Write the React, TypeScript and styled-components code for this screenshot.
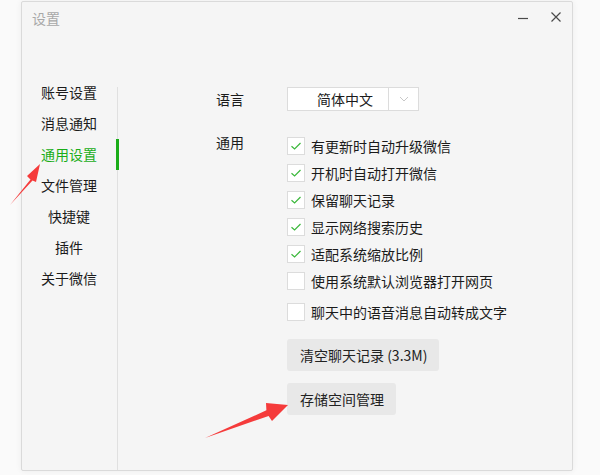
import styled, { createGlobalStyle } from "styled-components";

const GlobalStyle = createGlobalStyle`
  html, body {
    margin: 0;
    padding: 0;
    background: #fafafa;
  }
  body {
    font-family: "Noto Sans CJK SC", "Noto Sans", "Liberation Sans", sans-serif;
    font-size: 14px;
    color: #1b1b1b;
  }
`;

const Page = styled.div`
  position: relative;
  width: 600px;
  height: 475px;
  padding: 1px 0 0 21px;
  box-sizing: border-box;
`;

const Window = styled.div`
  width: 552px;
  height: 470px;
  box-sizing: border-box;
  background: #f5f5f5;
  border: 1px solid #dadada;
  border-radius: 2px;
  box-shadow: 0 0 6px rgba(0, 0, 0, 0.06);
  display: flex;
  flex-direction: column;
`;

const TitleBar = styled.div`
  height: 75px;
  display: flex;
  align-items: flex-start;
  justify-content: space-between;
  padding: 6px 0 0 10px;
  box-sizing: border-box;
`;

const Title = styled.div`
  color: #a8a8a8;
  font-size: 14px;
  line-height: 20px;
`;

const WinButtons = styled.div`
  display: flex;
  align-items: center;
  gap: 21px;
  padding: 3px 10px 0 0;
`;

const WinButton = styled.svg`
  width: 12px;
  height: 12px;
  display: block;
`;

const Body = styled.div`
  flex: 1;
  display: flex;
  min-height: 0;
`;

const Sidebar = styled.ul`
  position: relative;
  z-index: 1;
  width: 97px;
  margin: 0 -2px 0 0;
  padding: 0;
  list-style: none;
`;

const NavItem = styled.li<{ $active?: boolean }>`
  height: 31px;
  line-height: 31px;
  text-align: center;
  box-sizing: border-box;
  color: ${(p) => (p.$active ? "#1aad19" : "#1b1b1b")};
  border-right: 3px solid ${(p) => (p.$active ? "#1aad19" : "transparent")};
`;

const Content = styled.div`
  flex: 1;
  margin-top: 10px;
  border-left: 1px solid #e0e0e0;
  padding-left: 98px;
  display: flex;
  flex-direction: column;
`;

const Row = styled.div<{ $top?: number }>`
  display: flex;
  align-items: flex-start;
  margin-top: ${(p) => p.$top ?? 0}px;
`;

const Label = styled.div<{ $shift?: number }>`
  width: 71px;
  flex: none;
  line-height: 14px;
  margin-top: ${(p) => p.$shift ?? 0}px;
`;

const Select = styled.div`
  display: flex;
  height: 24px;
  background: #fff;
  border: 1px solid #dcdcdc;
  box-sizing: border-box;
`;

const SelectValue = styled.div`
  width: 100px;
  line-height: 22px;
  padding-left: 14px;
  box-sizing: border-box;
  text-align: center;
`;

const SelectArrow = styled.div`
  width: 29px;
  border-left: 1px solid #dcdcdc;
  display: flex;
  align-items: center;
  justify-content: center;
`;

const Options = styled.div`
  display: flex;
  flex-direction: column;
  align-items: flex-start;
`;

const CheckRow = styled.label<{ $top: number }>`
  display: flex;
  align-items: center;
  gap: 6px;
  height: 18px;
  margin-top: ${(p) => p.$top}px;
  line-height: 18px;
`;

const Box = styled.span`
  width: 18px;
  height: 18px;
  box-sizing: border-box;
  background: #fff;
  border: 1px solid #dcdcdc;
  display: flex;
  align-items: center;
  justify-content: center;
`;

const Button = styled.button<{ $top: number }>`
  height: 32px;
  margin-top: ${(p) => p.$top}px;
  padding: 0 12px 0 13px;
  border: none;
  border-radius: 3px;
  background: #e8e8e8;
  color: #222;
  font-family: inherit;
  font-size: 14px;
  cursor: pointer;
`;

const Annotations = styled.svg`
  position: absolute;
  left: 0;
  top: 0;
  width: 600px;
  height: 475px;
  pointer-events: none;
`;

const nav = ["账号设置", "消息通知", "通用设置", "文件管理", "快捷键", "插件", "关于微信"];

const options = [
  { text: "有更新时自动升级微信", checked: true, top: 0 },
  { text: "开机时自动打开微信", checked: true, top: 9 },
  { text: "保留聊天记录", checked: true, top: 9 },
  { text: "显示网络搜索历史", checked: true, top: 9 },
  { text: "适配系统缩放比例", checked: true, top: 9 },
  { text: "使用系统默认浏览器打开网页", checked: false, top: 9 },
  { text: "聊天中的语音消息自动转成文字", checked: false, top: 13 },
];

const Check = () => (
  <svg width="12" height="10" viewBox="0 0 12 10">
    <path d="M1.5 5.2 L4.6 8 L10.5 2" fill="none" stroke="#3cb83c" strokeWidth="1.2" />
  </svg>
);

export default function App() {
  return (
    <>
      <GlobalStyle />
      <Page>
        <Window>
          <TitleBar>
            <Title>设置</Title>
            <WinButtons>
              <WinButton viewBox="0 0 12 12">
                <path d="M1 7.5 H11" stroke="#4a4a4a" strokeWidth="1.2" />
              </WinButton>
              <WinButton viewBox="0 0 12 12">
                <path d="M1.5 1.5 L10.5 10.5 M10.5 1.5 L1.5 10.5" stroke="#4a4a4a" strokeWidth="1.2" />
              </WinButton>
            </WinButtons>
          </TitleBar>
          <Body>
            <Sidebar>
              {nav.map((n, i) => (
                <NavItem key={n} $active={i === 2}>{n}</NavItem>
              ))}
            </Sidebar>
            <Content>
              <Row>
                <Label $shift={5}>语言</Label>
                <Select>
                  <SelectValue>简体中文</SelectValue>
                  <SelectArrow>
                    <svg width="10" height="6" viewBox="0 0 10 6">
                      <path d="M1 1 L5 5 L9 1" fill="none" stroke="#c8c8c8" strokeWidth="1" />
                    </svg>
                  </SelectArrow>
                </Select>
              </Row>
              <Row $top={26}>
                <Label $shift={-2}>通用</Label>
                <Options>
                  {options.map((o) => (
                    <CheckRow key={o.text} $top={o.top}>
                      <Box>{o.checked && <Check />}</Box>
                      {o.text}
                    </CheckRow>
                  ))}
                  <Button $top={18}>清空聊天记录 (3.3M)</Button>
                  <Button $top={12}>存储空间管理</Button>
                </Options>
              </Row>
            </Content>
          </Body>
        </Window>
        <Annotations viewBox="0 0 600 475">
          <polygon
            points="10,205 30.5,179.5 27,176 40,164 36,182 32.5,180.5"
            fill="#f53b3b"
          />
          <polygon
            points="205,438 268.6,415.9 272,421 288,405 266,403 266.4,410.3"
            fill="#f53b3b"
          />
        </Annotations>
      </Page>
    </>
  );
}
